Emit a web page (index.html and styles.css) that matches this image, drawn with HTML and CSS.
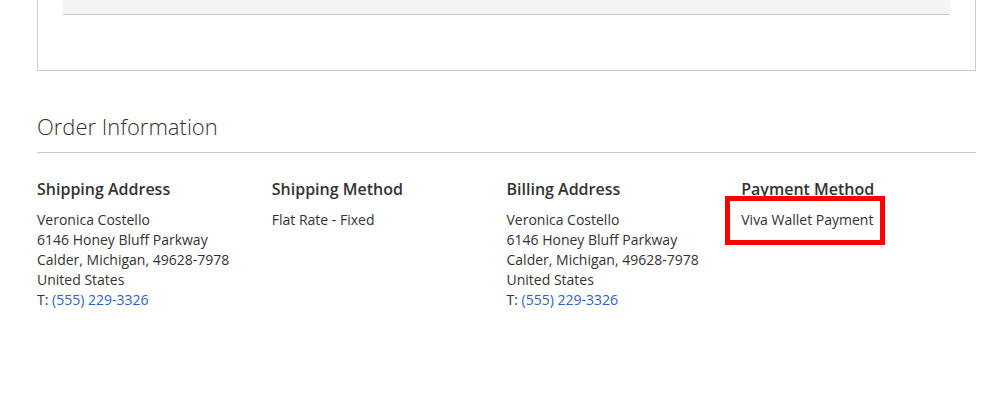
FILE: index.html
```html
<!DOCTYPE html>
<html lang="en">
<head>
<meta charset="utf-8">
<title>Order Information</title>
<link rel="stylesheet" href="styles.css">
</head>
<body>
<div class="page">
  <div class="items-box">
    <div class="items-footer"></div>
  </div>
  <div class="block-title"><strong>Order Information</strong></div>
  <div class="block-content">
    <div class="box">
      <strong class="box-title">Shipping Address</strong>
      <address class="box-content">Veronica Costello<br>6146 Honey Bluff Parkway<br>Calder, Michigan, 49628-7978<br>United States<br>T: <a href="#">(555) 229-3326</a></address>
    </div>
    <div class="box">
      <strong class="box-title">Shipping Method</strong>
      <div class="box-content">Flat Rate - Fixed</div>
    </div>
    <div class="box">
      <strong class="box-title">Billing Address</strong>
      <address class="box-content">Veronica Costello<br>6146 Honey Bluff Parkway<br>Calder, Michigan, 49628-7978<br>United States<br>T: <a href="#">(555) 229-3326</a></address>
    </div>
    <div class="box payment">
      <strong class="box-title">Payment Method</strong>
      <div class="box-content">Viva Wallet Payment</div>
      <span class="highlight"></span>
    </div>
  </div>
</div>
</body>
</html>
```
FILE: styles.css
```css
html, body {
  margin: 0;
  padding: 0;
  background: #fff;
}
body {
  font-family: "Open Sans", "Liberation Sans", sans-serif;
  color: #333;
  font-size: 14px;
  line-height: 20px;
}
.page {
  padding: 0 29px 0 37px;
}
.items-box {
  border: 1px solid #ccc;
  border-top: none;
  padding: 0 25px 55px 25px;
}
.items-footer {
  height: 14px;
  background: #f4f4f4;
  border-bottom: 1px solid #ccc;
}
.block-title {
  margin-top: 41px;
  border-bottom: 1px solid #c6c6c6;
  padding-bottom: 12px;
}
.block-title strong {
  display: block;
  font-size: 22px;
  font-weight: 300;
  line-height: 28px;
}
.block-content {
  display: grid;
  grid-template-columns: repeat(4, 1fr);
  padding-top: 25px;
}
.box {
  position: relative;
}
.box-title {
  display: block;
  font-size: 16px;
  font-weight: 600;
  line-height: 22px;
  margin-bottom: 10px;
}
.box-content {
  font-style: normal;
  display: block;
}
a {
  color: #2b63c6;
  text-decoration: none;
}
.highlight {
  position: absolute;
  left: -16px;
  top: 18px;
  width: 150px;
  height: 39px;
  border: 5px solid #ff0000;
}
```
